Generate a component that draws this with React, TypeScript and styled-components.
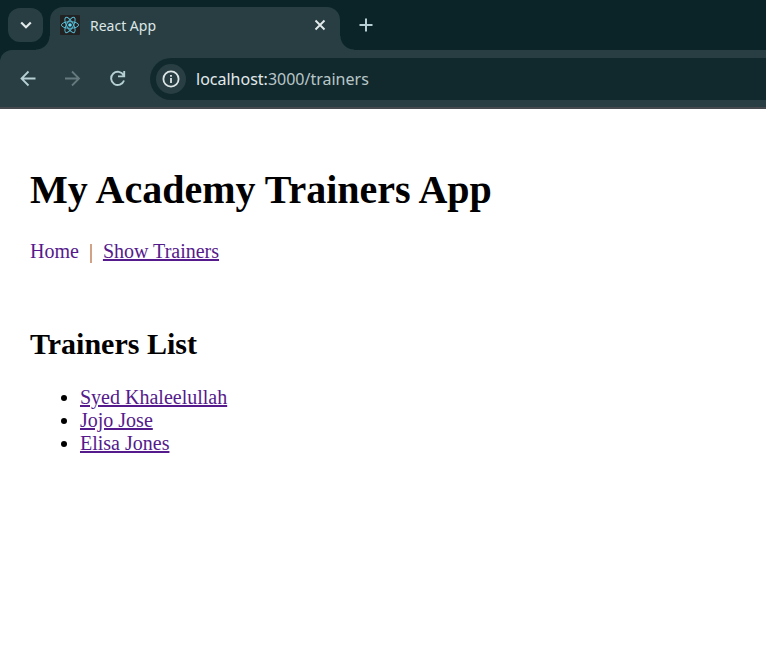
import React from 'react';
import styled, { createGlobalStyle } from 'styled-components';

const GlobalStyle = createGlobalStyle`
  *, *::before, *::after { box-sizing: border-box; }
  body {
    margin: 0;
    background: #ffffff;
    color: #000000;
    font: 20px/23px "Liberation Serif", "Times New Roman", serif;
  }
`;

const Chrome = styled.div`
  background: #0a2428;
  font-family: "Noto Sans", "Open Sans", sans-serif;
`;

const TabStrip = styled.div`
  display: flex;
  align-items: flex-end;
  height: 50px;
  padding-left: 8px;
`;

const PlainButton = styled.button`
  display: grid;
  place-items: center;
  flex: none;
  padding: 0;
  border: 0;
  background: transparent;
  color: #b5cfd4;
`;

const TabSearch = styled(PlainButton)`
  width: 35px;
  height: 34px;
  margin: 0 7px 8px 0;
  border-radius: 12px;
  background: #283e42;
  color: #e2eaeb;
`;

const Tab = styled.div`
  position: relative;
  display: flex;
  align-items: center;
  flex: 0 1 290px;
  height: 43px;
  padding: 0 10px 7px;
  border-radius: 13px 13px 0 0;
  background: #283e42;
  color: #dde6e7;

  &::before,
  &::after {
    content: "";
    position: absolute;
    bottom: 0;
    width: 14px;
    height: 14px;
  }
  &::before {
    right: 100%;
    background: radial-gradient(circle at 0 0, transparent 13px, #283e42 14px);
  }
  &::after {
    left: 100%;
    background: radial-gradient(circle at 100% 0, transparent 13px, #283e42 14px);
  }
`;

const TabTitle = styled.span`
  flex: 1;
  margin-left: 10px;
  font-size: 14px;
  line-height: 21px;
`;

const TabClose = styled(PlainButton)`
  width: 20px;
  height: 20px;
  color: #e2eaeb;
`;

const NewTab = styled(PlainButton)`
  width: 30px;
  height: 34px;
  margin: 0 0 8px 11px;
`;

const Toolbar = styled.div`
  display: flex;
  align-items: center;
  height: 59px;
  padding: 6px 0 5px 13px;
  border-bottom: 2px solid #46494d;
  border-radius: 12px 0 0 0;
  background: #283e42;
`;

const NavButton = styled(PlainButton)`
  width: 30px;
  height: 30px;
  margin-right: 15px;

  &:disabled { color: #667a7e; }
`;

const Omnibox = styled.div`
  display: flex;
  align-items: center;
  flex: 1;
  height: 42px;
  margin-left: 2px;
  padding-left: 6px;
  border-radius: 21px 0 0 21px;
  background: #11292d;
`;

const SiteInfo = styled(PlainButton)`
  width: 30px;
  height: 30px;
  border-radius: 50%;
  background: #283e42;
  color: #dde6e7;
`;

const Address = styled.div`
  margin-left: 10px;
  color: #b9c6c8;
  font-size: 16px;
  line-height: 24px;
`;

const Host = styled.span`
  color: #e2eaeb;
`;

const Page = styled.main`
  padding: 58px 30px 30px;
`;

const Title = styled.h1`
  margin: 0;
  font-size: 40px;
  line-height: 46px;
`;

const PageNav = styled.nav`
  display: flex;
  gap: 10px;
  margin-top: 27px;
`;

const TextLink = styled.a<{ $plain?: boolean }>`
  color: #551a8b;
  text-decoration: ${({ $plain }) => ($plain ? 'none' : 'underline')};
  text-decoration-thickness: 2px;
`;

const Separator = styled.span`
  color: #a85a10;
`;

const Heading = styled.h2`
  margin: 64px 0 0;
  font-size: 30px;
  line-height: 34px;
`;

const TrainerList = styled.ul`
  margin: 25px 0 0;
  padding-left: 50px;
`;

const Glyph = ({ size, d, stroke = 2 }: { size: number; d: string; stroke?: number }) => (
  <svg width={size} height={size} viewBox="0 0 20 20" fill="none" stroke="currentColor" strokeWidth={stroke} aria-hidden="true">
    <path d={d} />
  </svg>
);

const ReactMark = () => (
  <svg width="20" height="20" viewBox="0 0 20 20" aria-hidden="true">
    <rect width="20" height="20" rx="1" fill="#222222" />
    <g fill="none" stroke="#55b9d2" strokeWidth="1">
      <ellipse cx="10" cy="10" rx="8.6" ry="3.3" />
      <ellipse cx="10" cy="10" rx="8.6" ry="3.3" transform="rotate(60 10 10)" />
      <ellipse cx="10" cy="10" rx="8.6" ry="3.3" transform="rotate(120 10 10)" />
    </g>
    <circle cx="10" cy="10" r="1.8" fill="#61dafb" />
  </svg>
);

const trainers = ['Syed Khaleelullah', 'Jojo Jose', 'Elisa Jones'];

export default function App() {
  return (
    <>
      <GlobalStyle />
      <Chrome>
        <TabStrip>
          <TabSearch aria-label="Search tabs">
            <Glyph size={20} d="M5.2 7.5 10 12.2l4.8-4.7" stroke={2.2} />
          </TabSearch>
          <Tab>
            <ReactMark />
            <TabTitle>React App</TabTitle>
            <TabClose aria-label="Close tab">
              <Glyph size={20} d="m5.5 5.5 9 9m0-9-9 9" stroke={1.9} />
            </TabClose>
          </Tab>
          <NewTab aria-label="New tab">
            <Glyph size={20} d="M10 3.5v13M3.5 10h13" />
          </NewTab>
        </TabStrip>
        <Toolbar>
          <NavButton aria-label="Back">
            <Glyph size={20} d="M17.5 9.5H3.5m7-7-7 7 7 7" stroke={1.8} />
          </NavButton>
          <NavButton aria-label="Forward" disabled>
            <Glyph size={20} d="M2 9.5h14m-7-7 7 7-7 7" stroke={1.8} />
          </NavButton>
          <NavButton aria-label="Reload">
            <Glyph size={20} d="M15.6 6.4A6.6 6.6 0 1 0 16 11.5M16.2 2v5.4h-6.2" stroke={1.9} />
          </NavButton>
          <Omnibox>
            <SiteInfo aria-label="View site information">
              <Glyph size={20} d="M10 2.4a7.6 7.6 0 1 0 0 15.2 7.6 7.6 0 1 0 0-15.2ZM10 9v5M10 6v1.8" stroke={1.8} />
            </SiteInfo>
            <Address><Host>localhost:</Host>3000/trainers</Address>
          </Omnibox>
        </Toolbar>
      </Chrome>
      <Page>
        <Title>My Academy Trainers App</Title>
        <PageNav>
          <TextLink href="#home" $plain>Home</TextLink>
          <Separator>|</Separator>
          <TextLink href="#trainers">Show Trainers</TextLink>
        </PageNav>
        <Heading>Trainers List</Heading>
        <TrainerList>
          {trainers.map((name) => (
            <li key={name}><TextLink href="#trainer">{name}</TextLink></li>
          ))}
        </TrainerList>
      </Page>
    </>
  );
}
